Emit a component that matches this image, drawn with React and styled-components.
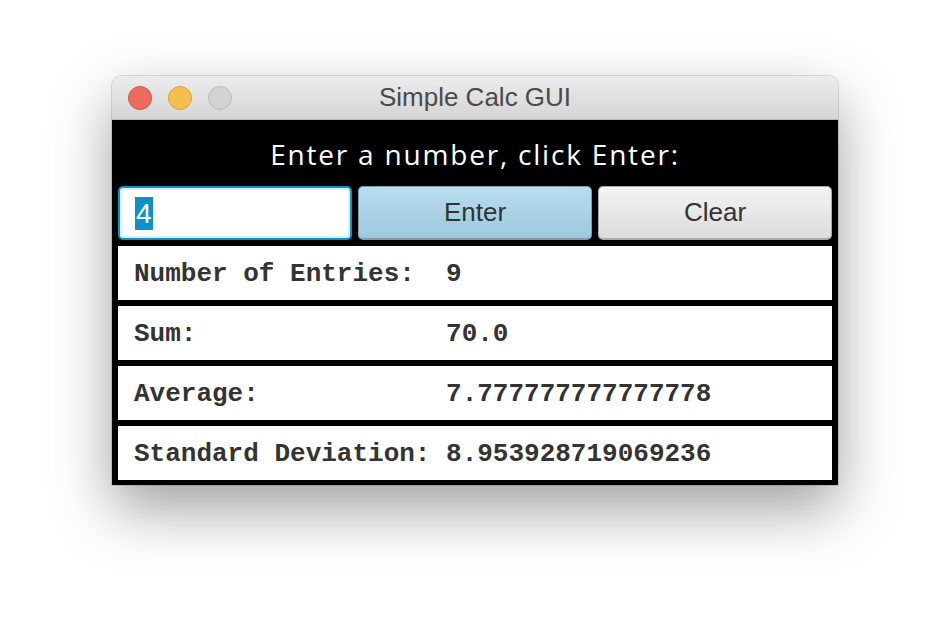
import React from 'react';
import styled, { createGlobalStyle } from 'styled-components';

const GlobalStyle = createGlobalStyle`
    html, body {
        margin: 0;
        padding: 0;
        background: #ffffff;
    }
    body {
        width: 950px;
        height: 634px;
        overflow: hidden;
    }
`;

const Page = styled.div`
    display: flex;
    justify-content: center;
    padding-top: 76px;
`;

const Window = styled.div`
    width: 726px;
    border-radius: 10px 10px 0 0;
    box-shadow: 0 24px 60px rgba(0, 0, 0, 0.38), 0 0 0 1px rgba(0, 0, 0, 0.12);
`;

const TitleBar = styled.div`
    position: relative;
    height: 44px;
    display: flex;
    align-items: center;
    justify-content: center;
    border-radius: 10px 10px 0 0;
    background: linear-gradient(#ececec, #d5d5d5);
    border-bottom: 1px solid #b9b9b9;
    box-sizing: border-box;
`;

const Lights = styled.div`
    position: absolute;
    left: 16px;
    top: 10px;
    display: flex;
    gap: 16px;
`;

const Light = styled.span`
    width: 24px;
    height: 24px;
    border-radius: 50%;
    box-sizing: border-box;
    background: ${(p) => p.$color};
    border: 1px solid ${(p) => p.$edge};
`;

const Title = styled.div`
    font-family: "Liberation Sans", Arial, sans-serif;
    font-size: 26px;
    color: #4a4a4a;
`;

const Body = styled.div`
    background: #000000;
    padding: 0 6px 5px;
    display: flex;
    flex-direction: column;
    gap: 6px;
`;

const Heading = styled.div`
    height: 60px;
    display: flex;
    align-items: center;
    justify-content: center;
    padding-top: 7px;
    box-sizing: border-box;
    font-family: "Open Sans", sans-serif;
    font-size: 28px;
    letter-spacing: 1.8px;
    color: #ffffff;
`;

const Controls = styled.div`
    display: grid;
    grid-template-columns: repeat(3, 1fr);
    gap: 6px;
    height: 54px;
`;

const TextField = styled.div`
    box-sizing: border-box;
    border: 2px solid #0a94c6;
    border-radius: 5px;
    box-shadow: inset 0 0 0 2px #d9eff9;
    background: #ffffff;
    display: flex;
    align-items: center;
    padding-left: 15px;
    font-family: "Liberation Sans", Arial, sans-serif;
    font-size: 28px;
`;

const Selected = styled.span`
    background: #0a93c9;
    color: #ffffff;
    line-height: 33px;
    padding: 0 1px;
`;

const Button = styled.div`
    box-sizing: border-box;
    border-radius: 5px;
    display: flex;
    align-items: center;
    justify-content: center;
    font-family: "Liberation Sans", Arial, sans-serif;
    font-size: 26px;
    color: #333333;
    background: ${(p) => (p.$primary ? 'linear-gradient(#b7ddee, #9ec8dc)' : 'linear-gradient(#f3f3f3, #dcdcdc)')};
    border: 1px solid ${(p) => (p.$primary ? '#7d9daf' : '#a9a9a9')};
    border-bottom-width: 2px;
`;

const StatRow = styled.div`
    height: 54px;
    background: #ffffff;
    display: flex;
    align-items: center;
    padding-left: 16px;
    padding-top: 2px;
    box-sizing: border-box;
    font-family: "Liberation Mono", "Courier New", monospace;
    font-weight: bold;
    font-size: 26px;
    color: #333333;
    white-space: pre;
`;

const Label = styled.span`
    width: 20ch;
`;

const stats = [
    { label: 'Number of Entries:', value: '9' },
    { label: 'Sum:', value: '70.0' },
    { label: 'Average:', value: '7.777777777777778' },
    { label: 'Standard Deviation:', value: '8.953928719069236' },
];

const App = () => (
    <Page>
        <GlobalStyle />
        <Window>
            <TitleBar>
                <Lights>
                    <Light $color="#ee6a5e" $edge="#d45448" />
                    <Light $color="#f5bf4f" $edge="#d8a13d" />
                    <Light $color="#d3d3d3" $edge="#bcbcbc" />
                </Lights>
                <Title>Simple Calc GUI</Title>
            </TitleBar>
            <Body>
                <Heading>Enter a number, click Enter:</Heading>
                <Controls>
                    <TextField>
                        <Selected>4</Selected>
                    </TextField>
                    <Button $primary>Enter</Button>
                    <Button>Clear</Button>
                </Controls>
                {stats.map((s) => (
                    <StatRow key={s.label}>
                        <Label>{s.label}</Label>
                        <span>{s.value}</span>
                    </StatRow>
                ))}
            </Body>
        </Window>
    </Page>
);

export default App;
